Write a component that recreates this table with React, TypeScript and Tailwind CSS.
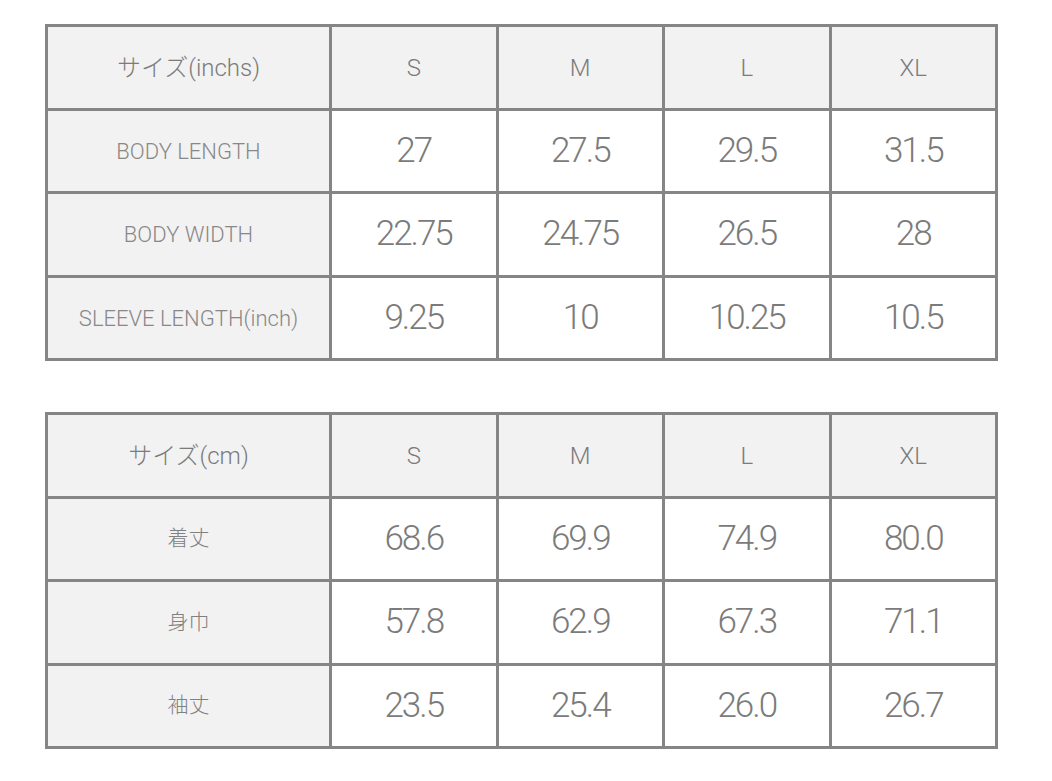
const inchRows = [
  { label: 'BODY LENGTH', values: ['27', '27.5', '29.5', '31.5'] },
  { label: 'BODY WIDTH', values: ['22.75', '24.75', '26.5', '28'] },
  { label: 'SLEEVE LENGTH(inch)', values: ['9.25', '10', '10.25', '10.5'] },
]

const cmRows = [
  { label: '着丈', values: ['68.6', '69.9', '74.9', '80.0'] },
  { label: '身巾', values: ['57.8', '62.9', '67.3', '71.1'] },
  { label: '袖丈', values: ['23.5', '25.4', '26.0', '26.7'] },
]

const sizes = ['S', 'M', 'L', 'XL']

function SizeTable({ title, rows, jp }: { title: string; rows: { label: string; values: string[] }[]; jp?: boolean }) {
  return (
    <div className="grid w-[953px] grid-cols-[281px_repeat(4,1fr)] grid-rows-[81px_80px_81px_80px] gap-[3px] bg-[#858585] p-[3px]">
      <div className="flex items-center justify-center bg-[#f2f2f2] text-[24px] font-light text-[#7b7b7b]">{title}</div>
      {sizes.map((s) => (
        <div key={s} className="flex items-center justify-center bg-[#f2f2f2] text-[24px] font-light text-[#7b7b7b]">
          {s}
        </div>
      ))}
      {rows.map((row) => (
        <div key={row.label} className="contents">
          <div
            className={
              jp
                ? 'flex items-center justify-center bg-[#f2f2f2] text-[21px] font-light text-[#808080]'
                : 'flex items-center justify-center bg-[#f2f2f2] text-[22px] font-light text-[#888]'
            }
          >
            {row.label}
          </div>
          {row.values.map((v, i) => (
            <div key={i} className="flex items-center justify-center bg-white text-[35px] font-light tracking-[-2px] text-[#7b7b7b]">
              {v}
            </div>
          ))}
        </div>
      ))}
    </div>
  )
}

export default function App() {
  return (
    <div
      className="min-h-[781px] w-[1052px] bg-white pl-[45px] pt-[24px]"
      style={{ fontFamily: 'Roboto, "Noto Sans CJK JP", sans-serif' }}
    >
      <SizeTable title="サイズ(inchs)" rows={inchRows} />
      <div className="h-[51px]" />
      <SizeTable title="サイズ(cm)" rows={cmRows} jp />
    </div>
  )
}
